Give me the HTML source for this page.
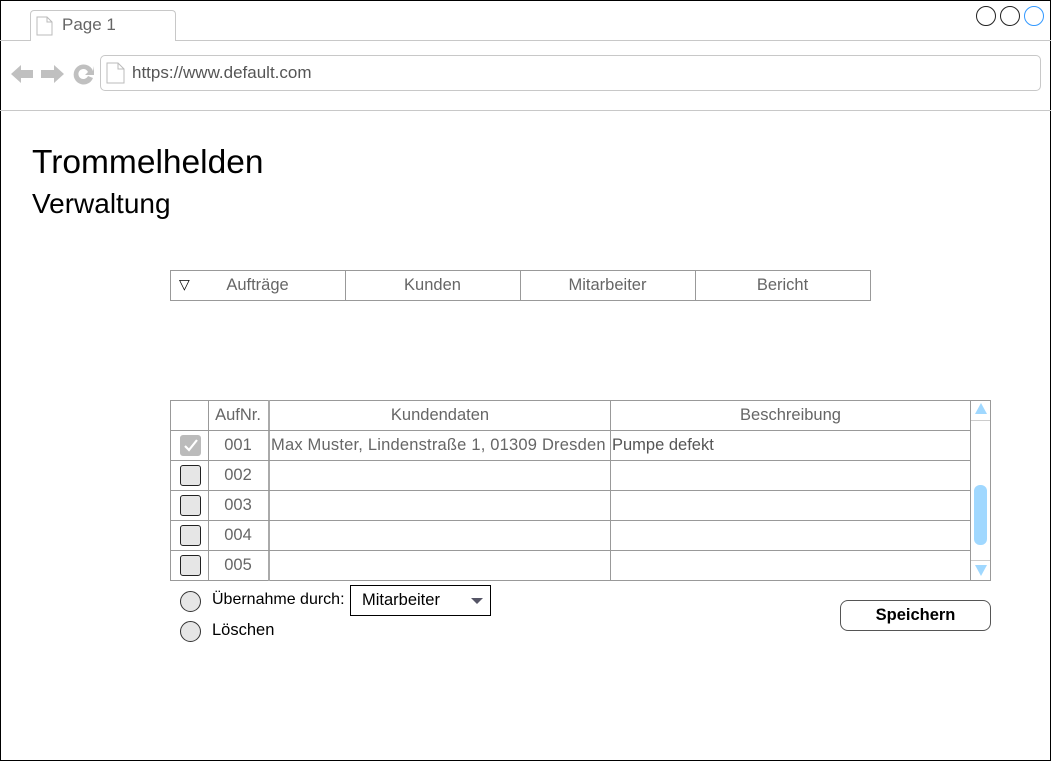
<!DOCTYPE html>
<html><head><meta charset="utf-8"><style>
*{box-sizing:border-box;margin:0;padding:0}
body{width:1051px;height:761px;position:relative;background:#fff;font-family:"Liberation Sans",Arial,Helvetica,sans-serif;overflow:hidden}
.a{position:absolute;white-space:nowrap}
.c{position:absolute;text-align:center;color:#666;font-size:16.5px;white-space:nowrap}
.cb{position:absolute;width:21px;height:21px;border:1px solid #222;border-radius:3px;background:#e6e6e6}
.rd{position:absolute;width:21px;height:21px;border:1px solid #333;border-radius:50%;background:#e6e6e6}
</style></head><body>
<div class="a" style="left:0;top:0;width:1051px;height:761px;border:1px solid #000"></div>
<div class="a" style="left:0;top:40px;width:1051px;height:1px;background:#c8c8c8"></div>
<div class="a" style="left:30px;top:10px;width:146px;height:31px;border:1px solid #c8c8c8;border-bottom:none;border-radius:4px 4px 0 0;background:#fff"></div>
<svg class="a" style="left:36px;top:16px" width="18" height="20"><path d="M1 1H11L16 6V19H1Z M11 1V6H16" fill="#fff" stroke="#bbb"/></svg>
<div class="a" style="left:62px;top:15px;font-size:17px;color:#666">Page 1</div>
<div class="a" style="left:976px;top:6px;width:20px;height:20px;border:1.5px solid #222;border-radius:50%"></div>
<div class="a" style="left:1000px;top:6px;width:20px;height:20px;border:1.5px solid #222;border-radius:50%"></div>
<div class="a" style="left:1024px;top:6px;width:20px;height:20px;border:1.5px solid #3399ff;border-radius:50%"></div>
<svg class="a" style="left:10px;top:62px" width="90" height="24">
<path d="M1 12L11 3V8H23V16H11V21Z" fill="#c0c0c0"/>
<path d="M54 12L44 3V8H31V16H44V21Z" fill="#c0c0c0"/>
<path d="M83 9A10 10 0 1 0 83 16L78 14A5 5 0 1 1 78 10L75 13H84V4Z" fill="#c0c0c0"/>
</svg>
<div class="a" style="left:100px;top:55px;width:941px;height:36px;border:1px solid #c8c8c8;border-radius:5px"></div>
<svg class="a" style="left:106px;top:62px" width="20" height="22"><path d="M1 1H12L18 7V21H1Z M12 1V7H18" fill="#fff" stroke="#bbb"/></svg>
<div class="a" style="left:132px;top:63px;font-size:17px;color:#555">https://www.default.com</div>
<div class="a" style="left:0;top:110px;width:1051px;height:1px;background:#c8c8c8"></div>
<div class="a" style="left:32px;top:144px;font-size:33.5px;color:#000">Trommelhelden</div>
<div class="a" style="left:32px;top:188px;font-size:28px;color:#000">Verwaltung</div>
<div class="a" style="left:170px;top:270px;width:701px;height:31px;border:1px solid #999"></div>
<div class="a" style="left:345px;top:270px;width:1px;height:31px;background:#999"></div>
<div class="a" style="left:520px;top:270px;width:1px;height:31px;background:#999"></div>
<div class="a" style="left:695px;top:270px;width:1px;height:31px;background:#999"></div>
<div class="a" style="left:179px;top:276px;font-size:14px;color:#000">▽</div>
<div class="c" style="left:170px;top:276px;width:175px">Aufträge</div>
<div class="c" style="left:345px;top:276px;width:175px">Kunden</div>
<div class="c" style="left:520px;top:276px;width:175px">Mitarbeiter</div>
<div class="c" style="left:695px;top:276px;width:175px">Bericht</div>
<div class="a" style="left:170px;top:400px;width:821px;height:181px;border:1px solid #999"></div>
<div class="a" style="left:208px;top:400px;width:1px;height:181px;background:#999"></div>
<div class="a" style="left:268px;top:400px;width:2px;height:181px;background:#aaa"></div>
<div class="a" style="left:610px;top:400px;width:1px;height:181px;background:#999"></div>
<div class="a" style="left:970px;top:400px;width:1px;height:181px;background:#999"></div>
<div class="a" style="left:170px;top:430px;width:801px;height:1px;background:#999"></div>
<div class="a" style="left:170px;top:460px;width:801px;height:1px;background:#999"></div>
<div class="a" style="left:170px;top:490px;width:801px;height:1px;background:#999"></div>
<div class="a" style="left:170px;top:520px;width:801px;height:1px;background:#999"></div>
<div class="a" style="left:170px;top:550px;width:801px;height:1px;background:#999"></div>
<div class="a" style="left:971px;top:420px;width:19px;height:1px;background:#ccc"></div>
<div class="a" style="left:971px;top:560px;width:19px;height:1px;background:#ccc"></div>
<div class="a" style="left:975px;top:403px;width:0;height:0;border-left:6px solid transparent;border-right:6px solid transparent;border-bottom:11px solid #a0d8ff"></div>
<div class="a" style="left:975px;top:565px;width:0;height:0;border-left:6px solid transparent;border-right:6px solid transparent;border-top:11px solid #a0d8ff"></div>
<div class="a" style="left:974px;top:485px;width:13px;height:60px;border-radius:6px;background:#a0d8ff"></div>
<div class="c" style="left:208px;top:406px;width:60px">AufNr.</div>
<div class="c" style="left:270px;top:406px;width:340px">Kundendaten</div>
<div class="c" style="left:611px;top:406px;width:359px">Beschreibung</div>
<div class="cb" style="left:180px;top:435px;background:#bbb;border-color:#bbb"></div>
<svg class="a" style="left:180px;top:435px" width="21" height="21"><path d="M5 11L9 15L17 5" fill="none" stroke="#fff" stroke-width="2.2"/></svg>
<div class="cb" style="left:180px;top:465px"></div>
<div class="cb" style="left:180px;top:495px"></div>
<div class="cb" style="left:180px;top:525px"></div>
<div class="cb" style="left:180px;top:555px"></div>
<div class="c" style="left:208px;top:436px;width:60px">001</div>
<div class="c" style="left:208px;top:466px;width:60px">002</div>
<div class="c" style="left:208px;top:496px;width:60px">003</div>
<div class="c" style="left:208px;top:526px;width:60px">004</div>
<div class="c" style="left:208px;top:556px;width:60px">005</div>
<div class="a" style="left:271px;top:436px;font-size:16.5px;color:#666;letter-spacing:0.2px">Max Muster, Lindenstraße 1, 01309 Dresden</div>
<div class="a" style="left:612px;top:436px;font-size:16.5px;color:#555">Pumpe defekt</div>
<div class="rd" style="left:180px;top:591px"></div>
<div class="a" style="left:212px;top:591px;font-size:16px;color:#000">Übernahme durch:</div>
<div class="a" style="left:350px;top:585px;width:141px;height:31px;border:1px solid #000"></div>
<div class="a" style="left:362px;top:591px;font-size:16.5px;color:#000">Mitarbeiter</div>
<div class="a" style="left:471px;top:598px;width:0;height:0;border-left:6px solid transparent;border-right:6px solid transparent;border-top:6px solid #556"></div>
<div class="rd" style="left:180px;top:621px"></div>
<div class="a" style="left:212px;top:621px;font-size:16.5px;color:#000">Löschen</div>
<div class="a" style="left:840px;top:600px;width:151px;height:31px;border:1px solid #555;border-radius:8px;text-align:center;line-height:29px;font-size:16.5px;font-weight:bold">Speichern</div>
</body></html>
